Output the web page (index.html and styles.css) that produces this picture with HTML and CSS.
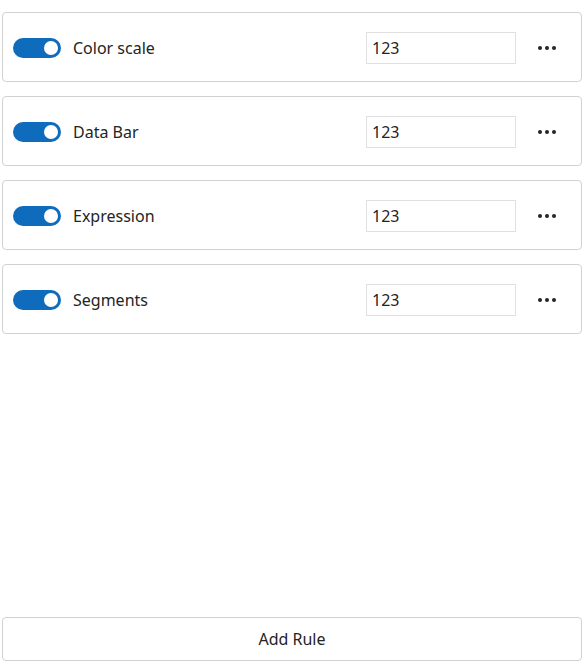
FILE: index.html
```html
<!DOCTYPE html>
<html>
<head>
<meta charset="utf-8">
<link rel="stylesheet" href="styles.css">
</head>
<body>
<div class="page">
  <div class="rules">
    <div class="card">
      <span class="toggle"><span class="thumb"></span></span>
      <span class="label">Color scale</span>
      <input class="field" type="text" value="123">
      <span class="more"><i></i><i></i><i></i></span>
    </div>
    <div class="card">
      <span class="toggle"><span class="thumb"></span></span>
      <span class="label">Data Bar</span>
      <input class="field" type="text" value="123">
      <span class="more"><i></i><i></i><i></i></span>
    </div>
    <div class="card">
      <span class="toggle"><span class="thumb"></span></span>
      <span class="label">Expression</span>
      <input class="field" type="text" value="123">
      <span class="more"><i></i><i></i><i></i></span>
    </div>
    <div class="card">
      <span class="toggle"><span class="thumb"></span></span>
      <span class="label">Segments</span>
      <input class="field" type="text" value="123">
      <span class="more"><i></i><i></i><i></i></span>
    </div>
  </div>
  <button class="add">Add Rule</button>
</div>
</body>
</html>
```
FILE: styles.css
```css
html, body {
  margin: 0;
  padding: 0;
  background: #ffffff;
}
body {
  font-family: "Noto Sans", "Open Sans", sans-serif;
  color: #242424;
}
.page {
  box-sizing: border-box;
  height: 662px;
  padding: 12px 5px 1px 2px;
  display: flex;
  flex-direction: column;
}
.rules {
  display: flex;
  flex-direction: column;
  gap: 14px;
}
.card {
  box-sizing: border-box;
  height: 70px;
  border: 1px solid #d1d1d1;
  border-radius: 4px;
  display: flex;
  align-items: center;
  padding: 1px 25px 0 10px;
}
.toggle {
  box-sizing: border-box;
  width: 48px;
  height: 20px;
  border-radius: 10px;
  background: #0f6cbd;
  display: flex;
  align-items: center;
  justify-content: flex-end;
  padding-right: 3px;
  flex: none;
}
.thumb {
  width: 14px;
  height: 14px;
  border-radius: 50%;
  background: #ffffff;
}
.label {
  margin-left: 12px;
  font-size: 16px;
  flex: 1;
}
.field {
  box-sizing: border-box;
  width: 150px;
  height: 32px;
  border: 1px solid #e0e0e0;
  border-radius: 0;
  padding: 0 5px;
  font-family: inherit;
  font-size: 16px;
  color: #242424;
  outline: none;
  margin-right: 22px;
}
.more {
  display: flex;
  gap: 3px;
  width: 18px;
}
.more i {
  width: 4px;
  height: 4px;
  border-radius: 50%;
  background: #242424;
}
.add {
  margin-top: auto;
  box-sizing: border-box;
  height: 44px;
  width: 100%;
  background: #ffffff;
  border: 1px solid #d1d1d1;
  border-radius: 4px;
  font-family: inherit;
  font-size: 16px;
  color: #242424;
}
```
